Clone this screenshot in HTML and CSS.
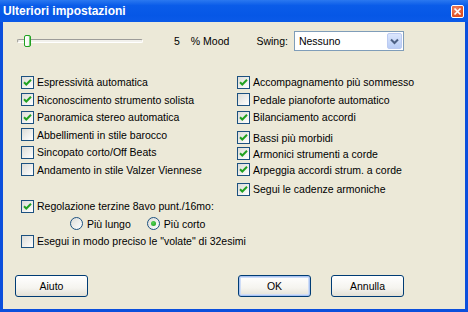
FILE: index.html
```html
<!DOCTYPE html>
<html lang="it">
<head>
    <meta charset="UTF-8">
    <title>Ulteriori impostazioni</title>
    <link rel="stylesheet" href="styles.css">
</head>
<body>
    <div class="window">
        <div class="titlebar">
            <span class="title">Ulteriori impostazioni</span>
            <span class="close-btn">
                <svg width="11" height="11" viewBox="0 0 11 11"><path d="M2.5 2.5 L8.5 8.5 M8.5 2.5 L2.5 8.5" stroke="#fff" stroke-width="1.7"/></svg>
            </span>
        </div>

        <div class="client">
            <!-- Mood slider + swing -->
            <div class="top-row">
                <div class="slider">
                    <div class="track"></div>
                    <div class="thumb"></div>
                </div>
                <span class="mood-value">5</span>
                <span class="mood-label">% Mood</span>
                <span class="swing-label">Swing:</span>
                <div class="combo">
                    <span class="combo-text">Nessuno</span>
                    <span class="combo-btn">
                        <svg width="9" height="7" viewBox="0 0 9 7"><path d="M1 1.5 L4.5 5 L8 1.5" fill="none" stroke="#4d6185" stroke-width="2"/></svg>
                    </span>
                </div>
            </div>

            <div class="columns">
                <div class="col">
                    <label class="check"><span class="box"><svg width="11" height="11" viewBox="0 0 11 11"><path d="M2 5.2 L4.3 7.5 L9 2.8" fill="none" stroke="#21a121" stroke-width="2"/></svg></span>Espressività automatica</label>
                    <label class="check"><span class="box"><svg width="11" height="11" viewBox="0 0 11 11"><path d="M2 5.2 L4.3 7.5 L9 2.8" fill="none" stroke="#21a121" stroke-width="2"/></svg></span>Riconoscimento strumento solista</label>
                    <label class="check"><span class="box"><svg width="11" height="11" viewBox="0 0 11 11"><path d="M2 5.2 L4.3 7.5 L9 2.8" fill="none" stroke="#21a121" stroke-width="2"/></svg></span>Panoramica stereo automatica</label>
                    <label class="check"><span class="box"></span>Abbellimenti in stile barocco</label>
                    <label class="check"><span class="box"></span>Sincopato corto/Off Beats</label>
                    <label class="check"><span class="box"></span>Andamento in stile Valzer Viennese</label>
                </div>
                <div class="col">
                    <label class="check"><span class="box"><svg width="11" height="11" viewBox="0 0 11 11"><path d="M2 5.2 L4.3 7.5 L9 2.8" fill="none" stroke="#21a121" stroke-width="2"/></svg></span>Accompagnamento più sommesso</label>
                    <label class="check"><span class="box"></span>Pedale pianoforte automatico</label>
                    <label class="check"><span class="box"><svg width="11" height="11" viewBox="0 0 11 11"><path d="M2 5.2 L4.3 7.5 L9 2.8" fill="none" stroke="#21a121" stroke-width="2"/></svg></span>Bilanciamento accordi</label>
                    <div class="check-group">
                        <label class="check"><span class="box"><svg width="11" height="11" viewBox="0 0 11 11"><path d="M2 5.2 L4.3 7.5 L9 2.8" fill="none" stroke="#21a121" stroke-width="2"/></svg></span>Bassi più morbidi</label>
                        <label class="check"><span class="box"><svg width="11" height="11" viewBox="0 0 11 11"><path d="M2 5.2 L4.3 7.5 L9 2.8" fill="none" stroke="#21a121" stroke-width="2"/></svg></span>Armonici strumenti a corde</label>
                        <label class="check"><span class="box"><svg width="11" height="11" viewBox="0 0 11 11"><path d="M2 5.2 L4.3 7.5 L9 2.8" fill="none" stroke="#21a121" stroke-width="2"/></svg></span>Arpeggia accordi strum. a corde</label>
                    </div>
                    <label class="check last"><span class="box"><svg width="11" height="11" viewBox="0 0 11 11"><path d="M2 5.2 L4.3 7.5 L9 2.8" fill="none" stroke="#21a121" stroke-width="2"/></svg></span>Segui le cadenze armoniche</label>
                </div>
            </div>

            <div class="options">
                <label class="check"><span class="box"><svg width="11" height="11" viewBox="0 0 11 11"><path d="M2 5.2 L4.3 7.5 L9 2.8" fill="none" stroke="#21a121" stroke-width="2"/></svg></span>Regolazione terzine 8avo punt./16mo:</label>
                <div class="radio-row">
                    <label class="radio"><span class="circle"></span>Più lungo</label>
                    <label class="radio"><span class="circle selected"></span>Più corto</label>
                </div>
                <label class="check"><span class="box"></span>Esegui in modo preciso le "volate" di 32esimi</label>
            </div>

            <div class="buttons">
                <button class="btn">Aiuto</button>
                <div class="btn-group">
                    <button class="btn default">OK</button>
                    <button class="btn">Annulla</button>
                </div>
            </div>
        </div>
    </div>
</body>
</html>
```

FILE: styles.css
```css
body {
    margin: 0;
    font-family: "Liberation Sans", Arial, sans-serif;
    font-size: 10.5px;
    color: #000;
}
.window {
    width: 468px;
    height: 312px;
    display: flex;
    flex-direction: column;
    background-color: #ece9d8;
}
.titlebar {
    flex: none;
    height: 22px;
    display: flex;
    align-items: center;
    justify-content: space-between;
    padding: 0 4px 0 3px;
    background: linear-gradient(#2a78f0 0%, #0a5ce9 25%, #0657e6 70%, #0b5ae8 100%);
    color: white;
}
.title {
    font-weight: bold;
    font-size: 12px;
}
.close-btn {
    width: 11px;
    height: 11px;
    border: 1px solid #fff;
    border-radius: 2px;
    background: radial-gradient(circle at 35% 30%, #f0886a, #dd4f23 70%);
    display: flex;
}
.client {
    flex: 1;
    display: flex;
    flex-direction: column;
    border: 3px solid #0b4fdc;
    border-top: none;
    padding: 9px 0 0 12px;
}
.top-row {
    display: flex;
    align-items: center;
    height: 20px;
    margin-left: 2px;
}
.slider {
    position: relative;
    width: 126px;
    height: 20px;
}
.track {
    margin-top: 8px;
    height: 2px;
    border-top: 1px solid #9d9c99;
    border-left: 1px solid #9d9c99;
    border-bottom: 1px solid #fff;
    border-right: 1px solid #fff;
    border-radius: 2px;
    background-color: #f2f1ec;
}
.thumb {
    position: absolute;
    left: 7px;
    top: 4px;
    width: 5px;
    height: 10px;
    border: 1px solid #21a121;
    border-radius: 2px;
    background: linear-gradient(90deg, #fff, #f3f3ef);
    box-shadow: inset -1px 0 #6fd66f;
}
.mood-value {
    margin-left: 31px;
}
.mood-label {
    margin-left: 11px;
}
.swing-label {
    margin-left: 27px;
}
.combo {
    margin-left: 6px;
    width: 110px;
    height: 20px;
    box-sizing: border-box;
    border: 1px solid #7f9db9;
    background-color: white;
    display: flex;
    align-items: center;
    justify-content: space-between;
    padding: 0 1px 0 4px;
}
.combo-btn {
    width: 15px;
    height: 16px;
    box-sizing: border-box;
    border: 1px solid #bccbf2;
    border-radius: 2px;
    background: linear-gradient(#dce6fd, #b9cdf6);
    display: flex;
    align-items: center;
    justify-content: center;
}
.columns {
    display: grid;
    grid-template-columns: 216px 1fr;
    margin: 23px 0 0 6px;
}
.col {
    display: flex;
    flex-direction: column;
    gap: 1.5px;
}
.check-group {
    display: flex;
    flex-direction: column;
    margin-top: 3px;
}
.check.last {
    margin-top: 2px;
}
.check {
    display: flex;
    align-items: center;
    height: 16px;
    white-space: nowrap;
}
.box {
    width: 11px;
    height: 11px;
    flex: none;
    margin-right: 3px;
    border: 1px solid #1c5180;
    background: linear-gradient(135deg, #dcdcd7, #fff);
    display: flex;
}
.options {
    display: flex;
    flex-direction: column;
    gap: 1.5px;
    margin: 1px 0 0 6px;
}
.radio-row {
    display: flex;
    align-items: center;
    height: 16px;
    padding-left: 49px;
    gap: 16px;
}
.radio {
    display: flex;
    align-items: center;
}
.circle {
    width: 11px;
    height: 11px;
    margin-right: 4px;
    border: 1px solid #1c5180;
    border-radius: 50%;
    background: linear-gradient(135deg, #dcdcd7, #fff);
    display: flex;
    align-items: center;
    justify-content: center;
}
.circle.selected::after {
    content: "";
    width: 5px;
    height: 5px;
    border-radius: 50%;
    background: radial-gradient(circle at 40% 35%, #55d455, #1a9a1a);
}
.buttons {
    display: flex;
    margin: 26px 0 0 0;
}
.btn-group {
    display: flex;
    gap: 20px;
    margin-left: auto;
    margin-right: 61px;
}
.btn {
    width: 73px;
    height: 22px;
    font-family: inherit;
    font-size: 10.5px;
    color: #000;
    border: 1px solid #003c74;
    border-radius: 3px;
    background: linear-gradient(#fff 0%, #f5f4ef 60%, #e3e1d6 100%);
    padding: 0;
}
.btn.default {
    box-shadow: inset 0 0 0 1px #a9c3f1, inset 0 0 0 2px #cfddf7;
}
```
